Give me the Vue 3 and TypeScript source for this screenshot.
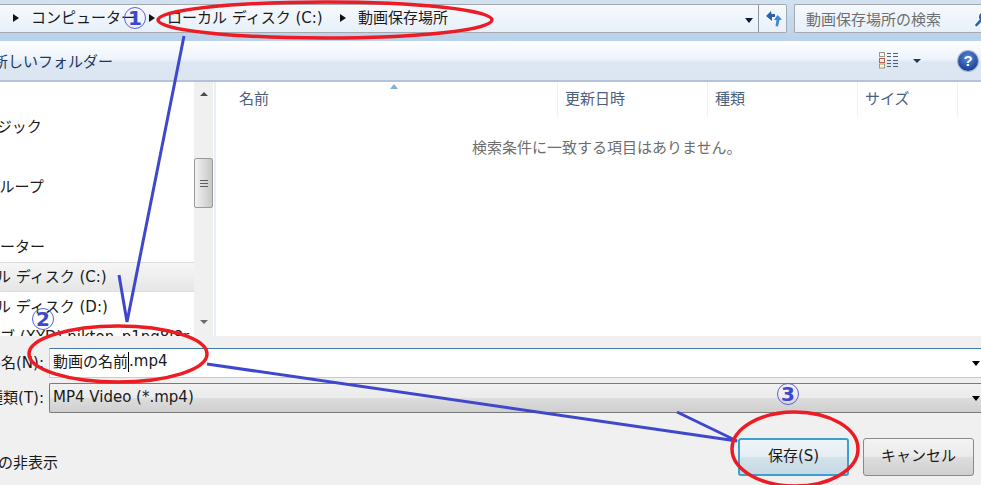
<template>
  <div class="dialog">
    <div class="nav">
      <div class="address">
        <div class="crumbs">
          <template v-for="c in crumbs" :key="c.label">
            <span class="sep"></span>
            <span class="crumb" :style="{ width: c.width + 'px' }">{{ c.label }}</span>
          </template>
        </div>
        <span class="addr-drop"></span>
        <div class="refresh">
          <svg width="18" height="18" viewBox="0 0 18 18">
            <path d="M1 6 L6 1 L6.5 4 L10 4 L10 7 L7 7 L7 11 Z" fill="#2d62a8" />
            <path d="M17 9.5 L12.5 5 L9 10 L11.5 10 L10.5 16 L13 16.5 L14.5 10 Z" fill="#3f86d2" />
          </svg>
        </div>
      </div>
      <div class="search">
        <span>動画保存場所の検索</span>
        <svg class="search-icon" width="14" height="16" viewBox="0 0 14 16">
          <circle cx="9" cy="6" r="4" fill="#dfeefa" stroke="#2f5f9c" stroke-width="2" />
          <path d="M6 9 L1.5 14" stroke="#2f5f9c" stroke-width="2.6" stroke-linecap="round" />
        </svg>
      </div>
    </div>

    <div class="toolbar">
      <span class="new-folder">新しいフォルダー</span>
      <svg class="view-icon" width="20" height="17" viewBox="0 0 20 17">
        <rect x="0.5" y="0.5" width="5" height="4" fill="#fff" stroke="#9a9a80" />
        <rect x="0.5" y="6.5" width="5" height="4" fill="#fde8e4" stroke="#c06050" />
        <rect x="0.5" y="12" width="5" height="4" fill="#fff6c8" stroke="#9a9a80" />
        <path d="M8 1.5h4M14 1.5h5M8 4.5h4M14 4.5h5M8 8.5h4M14 8.5h5M8 11.5h4M14 11.5h5M8 14.5h4M14 14.5h5" stroke="#4e5f78" stroke-width="1" />
      </svg>
      <span class="view-drop"></span>
      <span class="help">?</span>
    </div>

    <div class="main">
      <div class="tree">
        <div class="tree-list">
          <div
            v-for="(row, i) in treeRows"
            :key="i"
            class="tree-row"
            :class="{ selected: row.selected }"
          >
            <span :style="{ marginLeft: row.indent + 'px' }">{{ row.label }}</span>
          </div>
        </div>
        <div class="scrollbar">
          <span class="arrow-up"></span>
          <div class="thumb"><i></i><i></i><i></i></div>
          <span class="arrow-down"></span>
        </div>
      </div>
      <div class="files">
        <div class="columns">
          <span v-for="col in columns" :key="col.label" class="column" :style="{ width: col.width + 'px' }">{{ col.label }}</span>
          <span class="sort-mark"></span>
        </div>
        <p class="empty">検索条件に一致する項目はありません。</p>
      </div>
    </div>

    <div class="bottom">
      <div class="field name-field">
        <span class="label">ファイル名(N):</span>
        <div class="input">
          <span class="value">動画の名前</span><span class="caret"></span><span class="value">.mp4</span>
          <span class="combo-drop"></span>
        </div>
      </div>
      <div class="field type-field">
        <span class="label">ファイルの種類(T):</span>
        <div class="select">
          <span class="value">MP4 Video (*.mp4)</span>
          <span class="combo-drop"></span>
        </div>
      </div>
      <div class="actions">
        <span class="hide-folders">フォルダーの非表示</span>
        <button class="btn primary">保存(S)</button>
        <button class="btn">キャンセル</button>
      </div>
    </div>

    <!-- hand drawn notes on top of the screenshot -->
    <svg class="notes" width="981" height="485" viewBox="0 0 981 485">
      <g fill="none" stroke="#3f48cc" stroke-width="3">
        <path d="M184 36 L127 322 L119 275" />
        <path d="M207 364 L737 441 L677 412" />
      </g>
      <g fill="none" stroke="#ed1c24" stroke-width="3.5">
        <ellipse cx="325" cy="20" rx="167" ry="18" />
        <ellipse cx="118" cy="354" rx="89" ry="28" />
        <ellipse cx="795" cy="449" rx="63" ry="37" />
      </g>
    </svg>
    <span class="num num-1">1</span>
    <span class="num num-2">2</span>
    <span class="num num-3">3</span>
  </div>
</template>

<script setup lang="ts">
const crumbs = [
  { label: 'コンピューター', width: 118 },
  { label: 'ローカル ディスク (C:)', width: 173 },
  { label: '動画保存場所', width: 100 },
];

const treeRows = [
  { label: 'ミュージック', indent: -48 },
  { label: '', indent: 0 },
  { label: 'ホームグループ', indent: -60 },
  { label: '', indent: 0 },
  { label: 'コンピューター', indent: -60 },
  { label: 'ローカル ディスク (C:)', indent: -49, selected: true },
  { label: 'ローカル ディスク (D:)', indent: -49 },
  { label: 'ブ (XYD) nikton_p1ng8i8r (C', indent: 0 },
];

const columns = [
  { label: '名前', width: 342 },
  { label: '更新日時', width: 150 },
  { label: '種類', width: 150 },
  { label: 'サイズ', width: 100 },
];
</script>

<style>
html,
body {
  margin: 0;
  background: #f0f0f0;
}
</style>

<style scoped>
.dialog {
  position: relative;
  width: 981px;
  height: 485px;
  overflow: hidden;
  display: flex;
  flex-direction: column;
  background: #f0f0f0;
  color: #1a1a1a;
  font-family: "DejaVu Sans", "Noto Sans CJK JP", sans-serif;
  font-size: 15px;
}

.nav {
  height: 41px;
  flex: none;
  display: flex;
  gap: 7px;
  background: linear-gradient(#d3e2f1, #b9d1ea);
  box-sizing: border-box;
  padding: 4px 0 8px;
}

.address {
  width: 787px;
  display: flex;
  align-items: center;
  box-sizing: border-box;
  background: linear-gradient(#f5f9fd, #e7f0f9);
  border: 1px solid #a4a9b0;
  border-left: none;
  border-radius: 0 2px 2px 0;
}

.crumbs {
  flex: 1;
  display: flex;
  align-items: center;
  padding-left: 13px;
  margin-top: -4px;
}

.sep {
  width: 0;
  height: 0;
  border-left: 6px solid #111;
  border-top: 4px solid transparent;
  border-bottom: 4px solid transparent;
  margin-right: 12px;
  margin-top: 2px;
}

.crumb {
  flex: none;
  white-space: nowrap;
}

.addr-drop {
  width: 0;
  height: 0;
  border-top: 5px solid #10193a;
  border-left: 4px solid transparent;
  border-right: 4px solid transparent;
  margin-right: 5px;
  margin-top: 3px;
}

.refresh {
  width: 28px;
  height: 100%;
  border-left: 1px solid #8b929c;
  display: flex;
  align-items: center;
  justify-content: center;
  padding-left: 3px;
  box-sizing: border-box;
}

.search {
  flex: 1;
  display: flex;
  align-items: center;
  justify-content: space-between;
  padding-left: 11px;
  background: linear-gradient(#f5f9fd, #e7f0f9);
  border: 1px solid #a4a9b0;
  border-right: none;
  border-radius: 2px 0 0 2px;
  color: #6f6f6f;
  overflow: hidden;
  white-space: nowrap;
}

.search-icon {
  margin-right: -8px;
  flex: none;
}

.toolbar {
  height: 41px;
  flex: none;
  box-sizing: border-box;
  display: flex;
  align-items: center;
  background: linear-gradient(#fdfeff, #eef4fb 45%, #dde7f4 55%, #dce6f3);
  border-bottom: 2px solid #b4c2dc;
  color: #1e395b;
}

.new-folder {
  margin-left: -7px;
  white-space: nowrap;
}

.view-icon {
  margin-left: auto;
}

.view-drop {
  width: 0;
  height: 0;
  border-top: 4px solid #1e395b;
  border-left: 4px solid transparent;
  border-right: 4px solid transparent;
  margin: 0 60px 0 14px;
}

.help {
  position: absolute;
  left: 958px;
  top: 51px;
  width: 20px;
  height: 20px;
  border-radius: 50%;
  background: radial-gradient(circle at 50% 35%, #5c8de0, #1c3f94 75%);
  box-shadow: 0 0 0 1px #9fb2cd;
  color: #fff;
  font: bold 15px/20px "Liberation Sans", sans-serif;
  text-align: center;
}

.main {
  flex: 1;
  min-height: 0;
  display: flex;
  background: #fff;
}

.tree {
  width: 216px;
  flex: none;
  display: flex;
  box-sizing: border-box;
  border-right: 2px solid #e9eff6;
  padding-right: 1px;
}

.tree-list {
  flex: 1;
  min-width: 0;
  overflow: hidden;
  padding-top: 30px;
}

.tree-row {
  height: 30px;
  line-height: 30px;
  white-space: nowrap;
  box-sizing: border-box;
}

.tree-row span {
  display: inline-block;
}

.tree-row.selected {
  background: linear-gradient(#f6f6f6, #e6e6e6);
  border-top: 1px solid #dcdcdc;
  border-bottom: 1px solid #dcdcdc;
  line-height: 28px;
}

.scrollbar {
  width: 19px;
  flex: none;
  position: relative;
  background: #f0f0f0;
  box-sizing: border-box;
  display: flex;
  flex-direction: column;
  align-items: center;
}

.arrow-up {
  width: 0;
  height: 0;
  border-bottom: 4px solid #4a4a4a;
  border-left: 4px solid transparent;
  border-right: 4px solid transparent;
  margin-top: 10px;
}

.thumb {
  margin-top: 62px;
  width: 19px;
  height: 50px;
  box-sizing: border-box;
  border: 1px solid #9a9a9a;
  border-radius: 2px;
  background: linear-gradient(90deg, #f2f2f2, #dcdcdc 50%, #c6c6c6);
  display: flex;
  flex-direction: column;
  align-items: center;
  justify-content: center;
  gap: 2px;
}

.thumb i {
  width: 8px;
  height: 1px;
  background: #5e5e5e;
}

.arrow-down {
  width: 0;
  height: 0;
  border-top: 4px solid #6a6a6a;
  border-left: 4px solid transparent;
  border-right: 4px solid transparent;
  margin-top: 112px;
}

.files {
  flex: 1;
  min-width: 0;
}

.columns {
  position: relative;
  display: flex;
  height: 35px;
  align-items: stretch;
}

.column {
  flex: none;
  box-sizing: border-box;
  padding-left: 7px;
  line-height: 35px;
  color: #4c607a;
  border-right: 1px solid #eef1f5;
}

.column:first-child {
  padding-left: 23px;
}

.sort-mark {
  position: absolute;
  left: 174px;
  top: 2px;
  width: 0;
  height: 0;
  border-bottom: 5px solid #7fb2d6;
  border-left: 4px solid transparent;
  border-right: 4px solid transparent;
}

.empty {
  margin: 20px 0 0 256px;
  line-height: 22px;
  color: #6d6d6d;
  white-space: nowrap;
}

.bottom {
  height: 149px;
  flex: none;
  background: #f0f0f0;
  box-sizing: border-box;
  padding-top: 12px;
  display: flex;
  flex-direction: column;
}

.field {
  display: flex;
  align-items: center;
  padding-left: 49px;
  position: relative;
}

.label {
  position: absolute;
  right: calc(100% - 44px);
  white-space: nowrap;
  margin-top: -3px;
}

.input {
  flex: 1;
  height: 30px;
  box-sizing: border-box;
  display: flex;
  align-items: center;
  padding-left: 3px;
  background: #fff;
  border: 1px solid #b5cfe7;
  border-top-color: #3d7bad;
  border-right: none;
}

.value {
  margin-top: -5px;
}

.caret {
  width: 1px;
  height: 20px;
  margin-top: -2px;
  background: #000;
}

.type-field {
  margin-top: 5px;
}

.select {
  flex: 1;
  height: 30px;
  box-sizing: border-box;
  display: flex;
  align-items: center;
  padding-left: 3px;
  border: 1px solid #7a7a7a;
  border-right: none;
  border-radius: 2px 0 0 2px;
  background: linear-gradient(#f2f2f2, #ebebeb 48%, #dddddd 52%, #cfcfcf);
}

.select .value {
  margin-top: -3px;
}

.combo-drop {
  margin-left: auto;
  margin-right: 1px;
  width: 0;
  height: 0;
  border-top: 5px solid #000;
  border-left: 4px solid transparent;
  border-right: 4px solid transparent;
}

.actions {
  display: flex;
  align-items: center;
  margin-top: 25px;
  padding-right: 7px;
}

.hide-folders {
  margin-left: -77px;
  margin-top: 8px;
  white-space: nowrap;
}

.btn {
  width: 111px;
  height: 38px;
  box-sizing: border-box;
  padding: 0 0 5px;
  font: inherit;
  color: #1a1a1a;
  border: 1px solid #8a8a8a;
  border-radius: 3px;
  background: linear-gradient(#f3f3f3, #ebebeb 48%, #dddddd 52%, #cfcfcf);
}

.btn + .btn {
  margin-left: 14px;
}

.btn.primary {
  margin-left: auto;
  border: 2px solid #3c9fcf;
  background: linear-gradient(#eef4f8, #e6eef4 48%, #d2e2eb 52%, #c6d9e4);
}

.notes {
  position: absolute;
  left: 0;
  top: 0;
  pointer-events: none;
}

.num {
  position: absolute;
  width: 22px;
  height: 22px;
  box-sizing: border-box;
  border: 1px solid #5b62d8;
  border-radius: 50%;
  color: #3f48cc;
  font: 900 20px/20px "DejaVu Sans", sans-serif;
  text-align: center;
}

.num-1 {
  left: 124px;
  top: 7px;
}

.num-2 {
  left: 32px;
  top: 308px;
}

.num-3 {
  left: 777px;
  top: 383px;
}
</style>
